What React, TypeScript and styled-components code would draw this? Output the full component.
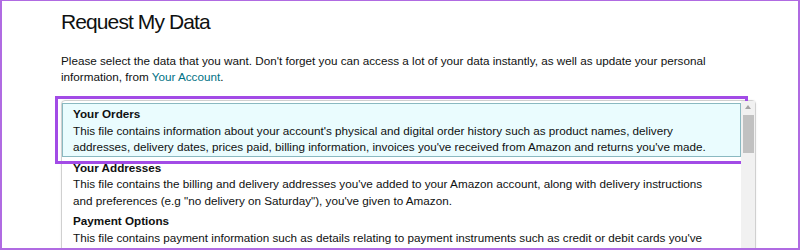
import styled, { createGlobalStyle } from "styled-components";

const GlobalStyle = createGlobalStyle`
  html, body {
    margin: 0;
    padding: 0;
    background: #ffffff;
  }
  body {
    font-family: "Liberation Sans", Arial, sans-serif;
    color: #0f1111;
  }
`

type DataCategory = {
    title: string
    text: string
}

const categories: DataCategory[] = [
    {
        title: "Your Orders",
        text: "This file contains information about your account's physical and digital order history such as product names, delivery addresses, delivery dates, prices paid, billing information, invoices you've received from Amazon and returns you've made.",
    },
    {
        title: "Your Addresses",
        text: "This file contains the billing and delivery addresses you've added to your Amazon account, along with delivery instructions and preferences (e.g \"no delivery on Saturday\"), you've given to Amazon.",
    },
    {
        title: "Payment Options",
        text: "This file contains payment information such as details relating to payment instruments such as credit or debit cards you've added to your account (\"Wallet\") and information, such as the billing address, associated with those payment instruments.",
    },
]

export default function App() {
    const selected = 0
    return (
        <>
            <GlobalStyle />
            <Frame>
                <Title>Request My Data</Title>
                <Intro>
                    Please select the data that you want. Don't forget you can access a lot of your data instantly, as well as update your personal information, from <Link href="#">Your Account</Link>.
                </Intro>
                <ListBox>
                    <List>
                        {categories.map((item, i) => (
                            <Option key={item.title} selected={i === selected}>
                                <OptionTitle>{item.title}</OptionTitle>
                                <OptionText>{item.text}</OptionText>
                            </Option>
                        ))}
                    </List>
                    <Scrollbar>
                        <ArrowUp />
                        <Thumb />
                    </Scrollbar>
                </ListBox>
            </Frame>
        </>
    )
}

const Frame = styled.div`
    box-sizing: border-box;
    width: 800px;
    height: 250px;
    overflow: hidden;
    border-style: solid;
    border-color: #b06be2;
    border-width: 1px 2px 2px 2px;
    padding: 7px 0 0 59px;
    display: flex;
    flex-direction: column;
`
const Title = styled.h1`
    margin: 0;
    font-size: 21px;
    line-height: 28px;
    font-weight: 400;
    letter-spacing: -0.9px;
    color: #0f1111;
`
const Intro = styled.p`
    margin: 17px 0 0;
    width: 690px;
    font-size: 11.7px;
    line-height: 16px;
    color: #0f1111;
`
const Link = styled.a`
    color: #007185;
    text-decoration: none;
`
const ListBox = styled.div`
    margin-top: 15px;
    width: 695px;
    height: 200px;
    flex-shrink: 0;
    box-sizing: border-box;
    display: flex;
    border: 1px solid #d0d0d0;
    border-radius: 4px;
    box-shadow: 0 0 2px rgba(0, 0, 0, 0.08);
`
const List = styled.div`
    flex: 1;
    padding-top: 2px;
`
const Option = styled.div<{ selected: boolean }>`
    border: 1px solid ${({ selected }) => (selected ? "#8ab9c1" : "transparent")};
    background-color: ${({ selected }) => (selected ? "#eafcfe" : "transparent")};
    outline: ${({ selected }) => (selected ? "3px solid #a24be6" : "none")};
    outline-offset: 4px;
    padding: 2px 22px 0 10px;
    font-size: 11.7px;
    line-height: 16.5px;
`
const OptionTitle = styled.div`
    font-weight: 700;
`
const OptionText = styled.div`
    font-weight: 400;
`
const Scrollbar = styled.div`
    width: 14px;
    background-color: #f1f1f1;
    display: flex;
    flex-direction: column;
    align-items: center;
    padding-top: 4px;
`
const ArrowUp = styled.div`
    width: 0;
    height: 0;
    border-left: 3.5px solid transparent;
    border-right: 3.5px solid transparent;
    border-bottom: 4px solid #a3a3a3;
`
const Thumb = styled.div`
    margin-top: 6px;
    width: 11px;
    height: 38px;
    background-color: #c1c1c1;
`
